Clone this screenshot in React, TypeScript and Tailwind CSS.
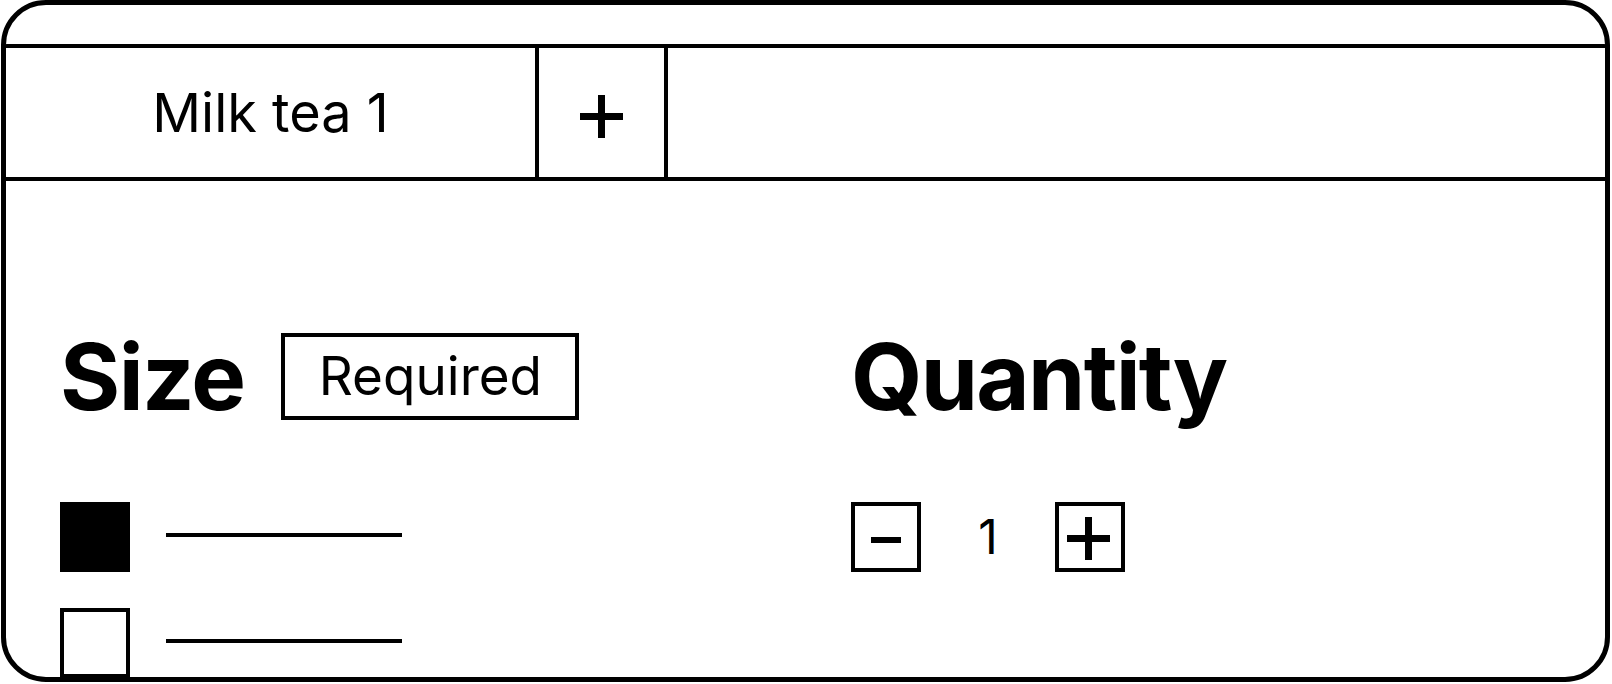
import React from "react";

function PlusIcon({ size = 43, stroke = 7 }: { size?: number; stroke?: number }) {
  const c = size / 2;
  return (
    <svg width={size} height={size} viewBox={`0 0 ${size} ${size}`} className="block">
      <rect x={0} y={c - stroke / 2} width={size} height={stroke} fill="#000" />
      <rect x={c - stroke / 2} y={0} width={stroke} height={size} fill="#000" />
    </svg>
  );
}

export default function App() {
  return (
    <div className="w-[1612px] h-[684px] bg-white text-black font-[Inter,sans-serif]">
      <div className="ml-[1px] w-[1609px] h-[682px] border-[5px] border-black rounded-[45px] overflow-hidden flex flex-col">
        <div className="h-[39px] shrink-0" />
        <div className="flex h-[137px] shrink-0 border-y-4 border-black">
          <div className="w-[533px] border-r-4 border-black flex items-center justify-center text-[54px] leading-none">
            Milk tea 1
          </div>
          <div className="w-[129px] border-r-4 border-black flex items-center justify-center">
            <div className="mt-[7px]">
              <PlusIcon size={43} stroke={7} />
            </div>
          </div>
          <div className="flex-1" />
        </div>
        <div className="flex pl-[54px] pt-[152px]">
          <div className="w-[791px] shrink-0 flex flex-col">
            <div className="flex items-center h-[87px] gap-[37px]">
              <span className="text-[92px] font-bold leading-none tracking-[-1.6px]">Size</span>
              <div className="w-[298px] h-[87px] border-4 border-black flex items-center justify-center text-[53px] leading-none">
                Required
              </div>
            </div>
            <div className="mt-[82px] flex flex-col gap-[36px]">
              <div className="flex items-center h-[70px] gap-[36px]">
                <div className="w-[70px] h-[70px] bg-black" />
                <div className="w-[236px] h-[4px] bg-black mb-[5px]" />
              </div>
              <div className="flex items-center h-[70px] gap-[36px]">
                <div className="w-[70px] h-[70px] border-4 border-black" />
                <div className="w-[236px] h-[4px] bg-black mb-[5px]" />
              </div>
            </div>
          </div>
          <div className="flex flex-col">
            <div className="flex items-center h-[87px]">
              <span className="text-[92px] font-bold leading-none tracking-[-1.7px]">Quantity</span>
            </div>
            <div className="mt-[82px] flex items-center h-[70px]">
              <div className="w-[70px] h-[70px] border-4 border-black flex items-center justify-center">
                <div className="w-[30px] h-[6px] bg-black mt-[6px]" />
              </div>
              <div className="w-[134px] text-center text-[48px] leading-none">1</div>
              <div className="w-[70px] h-[70px] border-4 border-black flex items-center justify-center">
                <div className="mt-[3px] mr-[4px]">
                  <PlusIcon size={43} stroke={7} />
                </div>
              </div>
            </div>
          </div>
        </div>
      </div>
    </div>
  );
}
